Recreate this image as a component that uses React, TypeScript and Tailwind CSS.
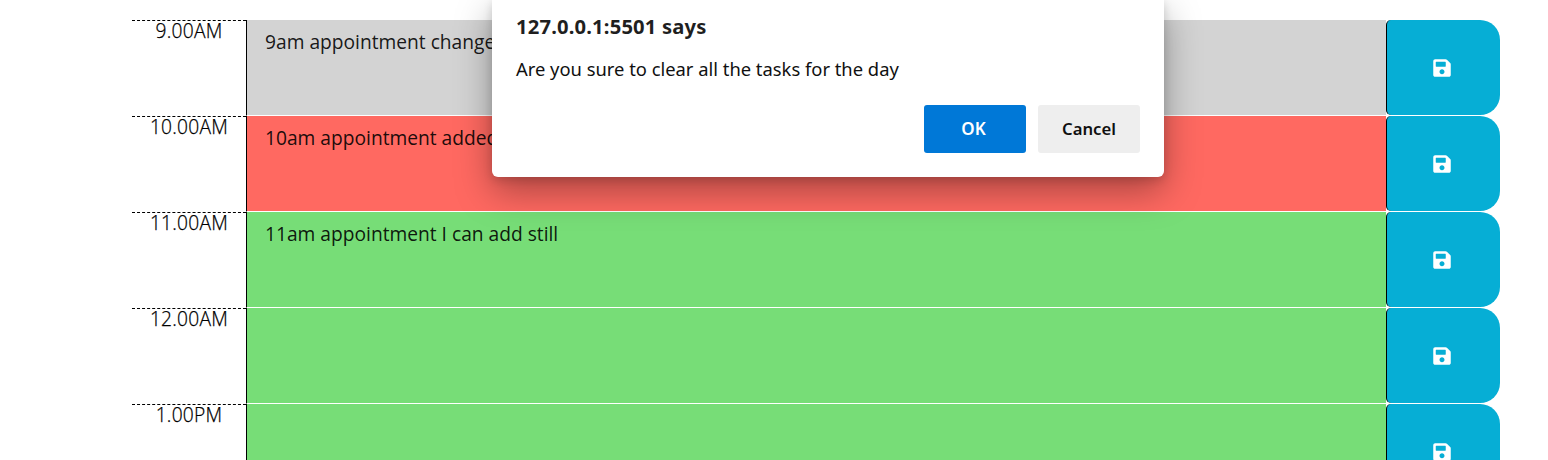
import { FaSave } from "react-icons/fa";

const rows = [
  { time: "9.00AM", task: "9am appointment changed", color: "bg-[#d3d3d3]" },
  { time: "10.00AM", task: "10am appointment added", color: "bg-[#ff6961]" },
  { time: "11.00AM", task: "11am appointment I can add still", color: "bg-[#77dd77]" },
  { time: "12.00AM", task: "", color: "bg-[#77dd77]" },
  { time: "1.00PM", task: "", color: "bg-[#77dd77]" },
];

function Dialog() {
  return (
    <div
      role="dialog"
      className="absolute top-0 left-[492px] flex h-[177px] w-[672px] flex-col rounded-b-[6px] bg-white px-6 pb-6 font-['Noto_Sans',sans-serif] shadow-[0_14px_36px_rgba(0,0,0,0.34),0_3px_10px_rgba(0,0,0,0.14)]"
    >
      <h1 className="mt-3 h-7 text-[20.2px] leading-7 font-bold tracking-[0.17px] whitespace-nowrap text-[#1f1f1f]">127.0.0.1:5501 says</h1>
      <p className="mt-[15px] h-7 text-[18.36px] leading-7 whitespace-nowrap text-[#101010]">Are you sure to clear all the tasks for the day</p>
      <div className="mt-auto flex justify-end gap-3 text-[17px] font-semibold">
        <button className="h-12 w-[102px] rounded-[3px] bg-[#0078d7] pr-[3px] text-white">OK</button>
        <button className="h-12 w-[102px] rounded-[3px] bg-[#eeeeee] text-[16.7px] text-[#101010]">Cancel</button>
      </div>
    </div>
  );
}

export default function App() {
  return (
    <div className="relative h-[460px] w-[1548px] overflow-hidden bg-white pt-5 pl-[132px] font-['Open_Sans',sans-serif] text-[19.2px] text-black">
      {rows.map((row) => (
        <div key={row.time} className="flex h-24 w-[1368px]">
          <div className="w-[114px] border-t border-dashed border-black text-center leading-5 font-light tracking-[0.25px] [-webkit-text-stroke:0.25px_black]">{row.time}</div>
          <div className={`w-[1140px] border-b border-l border-b-white border-l-black pt-2 pl-[18px] leading-7 font-normal text-black/90 ${row.color}`}>
            {row.task}
          </div>
          <button className="flex h-[95px] w-[114px] items-center justify-center rounded-l-[5px] rounded-r-[20px] border-l border-black bg-[#06aed5] pr-[2.5px] text-white">
            <FaSave size={20} />
          </button>
        </div>
      ))}
      <Dialog />
    </div>
  );
}
